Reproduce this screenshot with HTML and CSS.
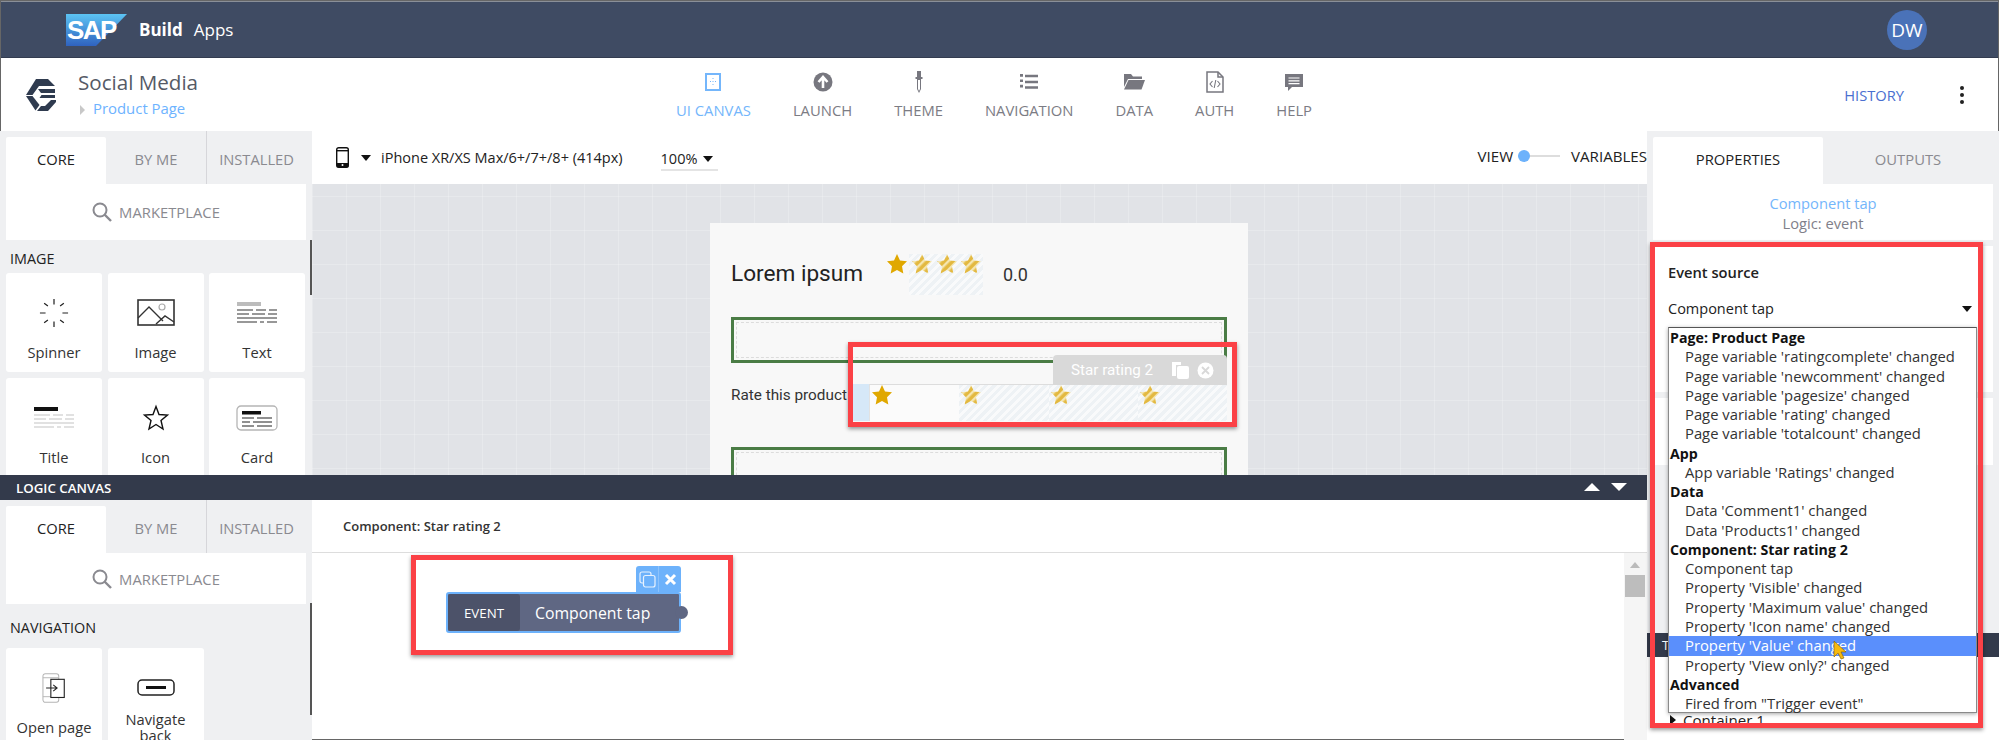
FILE: index.html
```html
<!DOCTYPE html>
<html>

<head>
    <title>SAP Build Apps</title>
    <link rel="stylesheet" href="styles.css">
</head>

<body>
<svg class="defs" width="0" height="0">
    <defs>
        <polygon id="star" points="10,0 13,6.5 20,7.3 15,12.2 16.300,19.500 10,16 3.700,19.500 5,12.2 0,7.3 7,6.5"/>
        <pattern id="stripes" width="6" height="6" patternUnits="userSpaceOnUse" patternTransform="rotate(45)">
            <rect width="6" height="6" fill="#e3b941"/>
            <rect width="2.400" height="6" fill="#f5e6b0"/>
        </pattern>
    </defs>
</svg>
<div class="app">

    <div class="topbar">
        <svg class="sap" width="61" height="32" viewBox="0 0 61 32">
            <defs>
                <linearGradient id="sapblue" x1="0" y1="0" x2="0" y2="1">
                    <stop offset="0" stop-color="#5cc4f4"/>
                    <stop offset="1" stop-color="#2f62bf"/>
                </linearGradient>
            </defs>
            <polygon points="0,0 61,0 30,32 0,32" fill="url(#sapblue)"/>
            <text x="1" y="25" class="sap-text">SAP</text>
        </svg>
        <span class="build">Build</span>
        <span class="apps">Apps</span>
        <span class="avatar">DW</span>
    </div>

    <div class="header">
        <div class="brand">
            <svg class="brand-logo" width="30" height="32" viewBox="0 0 30 32">
                <path d="M10 0H22L29 7H13L6.500 16H0z" fill="#2f3b4f"/>
                <path d="M0 17H6.500L13.500 26 9.500 31.500z" fill="#2f3b4f"/>
                <path d="M11 32H22L30 23V21H25L19 27H15z" fill="#2f3b4f"/>
                <path d="M12 10H29V14H15zM15.500 16H29V19H13.500z" fill="#2f3b4f"/>
            </svg>
            <div class="brand-text">
                <div class="app-name">Social Media</div>
                <div class="page-name"><span class="page-caret"></span>Product Page</div>
            </div>
        </div>
        <div class="nav">
            <div class="nav-item active">
                <svg width="24" height="24" viewBox="0 0 24 24">
                    <rect x="5" y="4" width="14" height="16" fill="none" stroke="#74b6fb" stroke-width="2"/>
                    <path d="M12 8v1M12 11v1M12 14v1M9 11.500h1M14 11.500h1" stroke="#74b6fb" stroke-width="1"/>
                </svg>
                UI CANVAS
            </div>
            <div class="nav-item">
                <svg width="24" height="24" viewBox="0 0 24 24">
                    <circle cx="12" cy="12" r="9.500" fill="#77777f"/>
                    <path d="M12 18V8M7.500 12L12 7l4.500 5" stroke="#fff" stroke-width="2.600" fill="none"/>
                </svg>
                LAUNCH
            </div>
            <div class="nav-item">
                <svg width="24" height="24" viewBox="0 0 24 24">
                    <path d="M10 1h4v6h1.500v2H14v10l-2 4-2-4V9H8.500V7H10z" fill="#77777f"/>
                    <path d="M11 10h2v9l-1 2-1-2z" fill="#fff"/>
                </svg>
                THEME
            </div>
            <div class="nav-item">
                <svg width="24" height="24" viewBox="0 0 24 24">
                    <path d="M3 5h3v3H3zM3 11h3v3H3zM3 17h3v3H3z" transform="translate(0 -.5) scale(1 .9)" fill="#77777f"/>
                    <path d="M8 6h13M8 12h13M8 17.500h13" stroke="#77777f" stroke-width="2.400"/>
                </svg>
                NAVIGATION
            </div>
            <div class="nav-item">
                <svg width="24" height="24" viewBox="0 0 24 24">
                    <path d="M2 4h7l2 2.500h9V9H6L2 17z" fill="#77777f"/>
                    <path d="M6.500 10H23l-3.500 9.500H2z" fill="#77777f"/>
                </svg>
                DATA
            </div>
            <div class="nav-item">
                <svg width="24" height="24" viewBox="0 0 24 24">
                    <path d="M4 2h11l5 5v15H4z" fill="none" stroke="#77777f" stroke-width="1.500"/>
                    <path d="M15 2v5h5" fill="none" stroke="#77777f" stroke-width="1.500"/>
                    <path d="M9.500 11l-2.500 3 2.500 3M14.500 11l2.500 3-2.500 3M12.800 10l-1.600 8" fill="none" stroke="#77777f" stroke-width="1.100"/>
                </svg>
                AUTH
            </div>
            <div class="nav-item">
                <svg width="24" height="24" viewBox="0 0 24 24">
                    <path d="M3 4h18v13H10l-4 4v-4H3z" fill="#77777f"/>
                    <path d="M6.500 8h11M6.500 10.800h11M6.500 13.600h11" stroke="#fff" stroke-width="1.200"/>
                </svg>
                HELP
            </div>
        </div>
        <div class="header-right">
            <span class="history">HISTORY</span>
            <span class="dots"><i></i><i></i><i></i></span>
        </div>
    </div>

    <div class="main">
        <div class="workspace">

            <div class="split upper">
                <div class="palette">
                    <div class="tabs">
                        <div class="tab on">CORE</div>
                        <div class="tab">BY ME</div>
                        <div class="tab sep">INSTALLED</div>
                    </div>
                    <div class="search">
                        <svg width="20" height="20" viewBox="0 0 20 20"><circle cx="8" cy="8" r="6.500" fill="none" stroke="#8a8a90" stroke-width="2"/><path d="M12.500 12.500L19 19" stroke="#8a8a90" stroke-width="2.400"/></svg>
                        MARKETPLACE
                    </div>
                    <div class="group-label image-label">IMAGE</div>
                    <div class="tiles">
                        <div class="tile">
                            <svg class="tile-icon" width="32" height="32" viewBox="0 0 32 32">
                                <path d="M16 1v6M16 25v6M1 16h6M25 16h6M5.500 5.500l4 3M26.500 5.500l-4 3M5.500 26.500l4-3M26.500 26.500l-4-3" stroke="#222" stroke-width="1.300"/>
                            </svg>
                            Spinner
                        </div>
                        <div class="tile">
                            <svg class="tile-icon" width="38" height="28" viewBox="0 0 38 28">
                                <rect x="1" y="1" width="36" height="25" fill="none" stroke="#333" stroke-width="1.600"/>
                                <path d="M1 19L12 8l14 14M19 25l9-8 9 6" fill="none" stroke="#333" stroke-width="1.400"/>
                                <circle cx="25" cy="8" r="3" fill="none" stroke="#aaa" stroke-width="1.200"/>
                            </svg>
                            Image
                        </div>
                        <div class="tile">
                            <svg class="tile-icon" width="40" height="24" viewBox="0 0 40 24">
                                <rect x="0" y="1" width="24" height="4" fill="#bcbcbc"/>
                                <path d="M0 9h16M19 9h10M32 9h8M0 13h12M15 13h13M31 13h9M0 17h40M0 21h20M23 21h4M30 21h10" stroke="#333" stroke-width="1.200"/>
                            </svg>
                            Text
                        </div>
                        <div class="tile">
                            <svg class="tile-icon" width="40" height="24" viewBox="0 0 40 24">
                                <rect x="0" y="1" width="24" height="4" fill="#111"/>
                                <path d="M0 9h16M19 9h10M32 9h8M0 13h12M15 13h13M31 13h9M0 17h40M0 21h20M23 21h4M30 21h10" stroke="#c4c4c4" stroke-width="1.200"/>
                            </svg>
                            Title
                        </div>
                        <div class="tile">
                            <svg class="tile-icon" width="26" height="26" viewBox="0 0 26 26">
                                <polygon points="13,1.500 16,9.500 24.500,10 18,15.500 20,24 13,19.500 6,24 8,15.500 1.500,10 10,9.500" fill="none" stroke="#111" stroke-width="1.400"/>
                            </svg>
                            Icon
                        </div>
                        <div class="tile">
                            <svg class="tile-icon" width="42" height="26" viewBox="0 0 42 26">
                                <rect x="1" y="1" width="40" height="24" rx="4" fill="none" stroke="#b5b5b5" stroke-width="1.300"/>
                                <rect x="6" y="6" width="19" height="3.500" fill="#111"/>
                                <path d="M6 13h12M21 13h15M6 17h8M17 17h19M6 21h12M21 21h15" stroke="#222" stroke-width="1.200"/>
                            </svg>
                            Card
                        </div>
                    </div>
                    <div class="thumb thumb-upper"></div>
                </div>

                <div class="stage">
                    <div class="stage-bar">
                        <svg class="phone" width="13" height="21" viewBox="0 0 13 21">
                            <rect x=".7" y=".7" width="11.600" height="19.600" rx="2" fill="none" stroke="#111" stroke-width="1.400"/>
                            <rect x=".7" y="3" width="11.600" height="1.400" fill="#111"/>
                            <rect x=".7" y="16" width="11.600" height="4.300" fill="#111"/>
                            <circle cx="6.500" cy="18" r="1" fill="#fff"/>
                        </svg>
                        <span class="caret device-caret"></span>
                        <span class="device">iPhone XR/XS Max/6+/7+/8+ (414px)</span>
                        <span class="zoom-select">100% <span class="caret"></span></span>
                        <span class="view-toggle">
                            VIEW
                            <span class="track"><i></i></span>
                            VARIABLES
                        </span>
                    </div>
                    <div class="canvas">
                        <div class="phone-card">
                            <div class="title-row">
                                <span class="lorem">Lorem ipsum</span>
                                <svg class="star-one" width="22" height="20" viewBox="0 0 20 20"><use href="#star" fill="#e0a800"/></svg>
                                <div class="hatched avg-stars">
                                    <svg width="20" height="20" viewBox="0 0 20 20"><use href="#star" fill="url(#stripes)"/></svg>
                                    <svg width="20" height="20" viewBox="0 0 20 20"><use href="#star" fill="url(#stripes)"/></svg>
                                    <svg width="20" height="20" viewBox="0 0 20 20"><use href="#star" fill="url(#stripes)"/></svg>
                                </div>
                                <span class="score">0.0</span>
                            </div>
                            <div class="green-box"><div class="dashed"></div></div>
                            <div class="rate-row">
                                <span class="rate-label">Rate this product</span>
                                <span class="rate-pad"></span>
                                <div class="rating">
                                    <div class="rating-bar">
                                        <span>Star rating 2</span>
                                        <svg width="19" height="19" viewBox="0 0 19 19">
                                            <path d="M1 1h9v3H5v11H1z" fill="#fff"/>
                                            <rect x="6" y="5" width="12" height="13" rx="2" fill="#fff"/>
                                        </svg>
                                        <svg class="bar-close" width="17" height="17" viewBox="0 0 17 17">
                                            <circle cx="8.500" cy="8.500" r="8" fill="#fff"/>
                                            <path d="M5 5l7 7M12 5l-7 7" stroke="#d9d9d9" stroke-width="1.800"/>
                                        </svg>
                                    </div>
                                    <div class="rating-cell"><svg width="20" height="20" viewBox="0 0 20 20"><use href="#star" fill="#e0a800"/></svg></div>
                                    <div class="rating-cell hatched"><svg width="20" height="20" viewBox="0 0 20 20"><use href="#star" fill="url(#stripes)"/></svg></div>
                                    <div class="rating-cell hatched"><svg width="20" height="20" viewBox="0 0 20 20"><use href="#star" fill="url(#stripes)"/></svg></div>
                                    <div class="rating-cell hatched"><svg width="20" height="20" viewBox="0 0 20 20"><use href="#star" fill="url(#stripes)"/></svg></div>
                                </div>
                            </div>
                            <div class="green-box low"><div class="dashed"></div></div>
                        </div>
                        <div class="redbox red-rating"></div>
                    </div>
                </div>
            </div>

            <div class="logic-bar">
                LOGIC CANVAS
                <span class="logic-arrows"><i class="up"></i><i class="down"></i></span>
            </div>

            <div class="split lower">
                <div class="palette">
                    <div class="tabs">
                        <div class="tab on">CORE</div>
                        <div class="tab">BY ME</div>
                        <div class="tab sep">INSTALLED</div>
                    </div>
                    <div class="search low">
                        <svg width="20" height="20" viewBox="0 0 20 20"><circle cx="8" cy="8" r="6.500" fill="none" stroke="#8a8a90" stroke-width="2"/><path d="M12.500 12.500L19 19" stroke="#8a8a90" stroke-width="2.400"/></svg>
                        MARKETPLACE
                    </div>
                    <div class="group-label nav-label">NAVIGATION</div>
                    <div class="tiles">
                        <div class="tile">
                            <svg class="tile-icon" width="30" height="38" viewBox="0 0 30 38">
                                <rect x="1" y="1" width="20" height="36" rx="3" fill="none" stroke="#b5b5b5" stroke-width="1.300"/>
                                <path d="M1 6h20M1 30h20" stroke="#b5b5b5" stroke-width="1.200"/>
                                <rect x="11" y="8" width="17" height="23" fill="#fff" stroke="#222" stroke-width="1.400"/>
                                <path d="M5 19h14M14 15l5 4-5 4" fill="none" stroke="#222" stroke-width="1.300"/>
                            </svg>
                            Open page
                        </div>
                        <div class="tile two-line">
                            <svg class="tile-icon" width="38" height="18" viewBox="0 0 38 18">
                                <rect x="1" y="1" width="36" height="15" rx="4" fill="none" stroke="#222" stroke-width="1.500"/>
                                <rect x="9" y="7" width="20" height="3" fill="#111"/>
                            </svg>
                            Navigate<br>back
                        </div>
                    </div>
                    <div class="thumb thumb-lower"></div>
                </div>

                <div class="logic">
                    <div class="logic-head">Component: Star rating 2</div>
                    <div class="logic-canvas">
                        <div class="flow-node">
                            <div class="node-tools">
                                <span>
                                    <svg width="17" height="17" viewBox="0 0 17 17">
                                        <rect x="1" y="1" width="11" height="11" rx="2" fill="none" stroke="#e8f2fe" stroke-width="1.200"/>
                                        <rect x="4.500" y="4.500" width="11.500" height="11.500" rx="2" fill="#6db2fb" stroke="#e8f2fe" stroke-width="1.200"/>
                                    </svg>
                                </span>
                                <span>
                                    <svg width="13" height="13" viewBox="0 0 13 13"><path d="M2 2l9 9M11 2l-9 9" stroke="#fff" stroke-width="3"/></svg>
                                </span>
                            </div>
                            <div class="node-kind">EVENT</div>
                            <div class="node-name">Component tap</div>
                            <span class="node-port"></span>
                        </div>
                        <div class="redbox red-node"></div>
                        <div class="scrollbar">
                            <i class="scroll-up"></i>
                            <i class="scroll-thumb"></i>
                        </div>
                    </div>
                </div>
            </div>
        </div>

        <div class="props">
            <div class="tabs prop-tabs">
                <div class="tab on">PROPERTIES</div>
                <div class="tab">OUTPUTS</div>
            </div>
            <div class="prop-title">
                <div class="prop-name">Component tap</div>
                <div class="prop-kind">Logic: event</div>
            </div>
            <div class="prop-card source-card">
                <div class="source-title">Event source</div>
                <div class="source-value">Component tap <span class="caret"></span></div>
            </div>
            <div class="prop-card second-card"></div>
            <div class="tree-bar">T</div>
            <div class="tree">
                <div class="tree-row"><span class="tree-caret"></span>Container 1</div>
            </div>

            <div class="dropdown">
                <div class="dd-group">Page: Product Page</div>
                <div class="dd-item">Page variable 'ratingcomplete' changed</div>
                <div class="dd-item">Page variable 'newcomment' changed</div>
                <div class="dd-item">Page variable 'pagesize' changed</div>
                <div class="dd-item">Page variable 'rating' changed</div>
                <div class="dd-item">Page variable 'totalcount' changed</div>
                <div class="dd-group">App</div>
                <div class="dd-item">App variable 'Ratings' changed</div>
                <div class="dd-group">Data</div>
                <div class="dd-item">Data 'Comment1' changed</div>
                <div class="dd-item">Data 'Products1' changed</div>
                <div class="dd-group">Component: Star rating 2</div>
                <div class="dd-item">Component tap</div>
                <div class="dd-item">Property 'Visible' changed</div>
                <div class="dd-item">Property 'Maximum value' changed</div>
                <div class="dd-item">Property 'Icon name' changed</div>
                <div class="dd-item selected">Property 'Value' changed
                    <svg class="pointer" width="14" height="20" viewBox="0 0 14 20">
                        <path d="M1 1l12 11H8l3 6-3 1-3-6-4 4z" fill="#f6b90f" stroke="#7a5a00" stroke-width=".6"/>
                    </svg>
                </div>
                <div class="dd-item">Property 'View only?' changed</div>
                <div class="dd-group">Advanced</div>
                <div class="dd-item">Fired from "Trigger event"</div>
            </div>
            <div class="redbox red-source"></div>
        </div>
    </div>
</div>
</body>

</html>
```

FILE: styles.css
```css
* {
  box-sizing: border-box;
}

html, body {
  margin: 0;
  padding: 0;
}

body {
  width: 1999px;
  height: 740px;
  overflow: hidden;
  font-family: "Open Sans", "Liberation Sans", sans-serif;
  color: #222;
}

.defs {
  position: absolute;
}

.app {
  width: 1999px;
  height: 740px;
  display: flex;
  flex-direction: column;
  outline: 1px solid #666;
  outline-offset: -1px;
}

/* Top bar */
.topbar {
  height: 58px;
  border-top: 2px solid #8a8f98;
  border-bottom: 1px solid #333c50;
  background-color: #3f4b63;
  display: flex;
  align-items: center;
  padding-left: 66px;
  color: #fff;
  font-size: 17px;
}

.sap {
  margin-right: 12px;
}

.sap-text {
  font-family: "Liberation Sans", sans-serif;
  font-weight: bold;
  font-size: 26px;
  letter-spacing: -1.5px;
  fill: #fff;
}

.build {
  font-weight: bold;
  margin-right: 11px;
}

.avatar {
  margin-left: auto;
  margin-right: 72px;
  width: 40px;
  height: 40px;
  border-radius: 50%;
  background-color: #4a72b8;
  font-size: 19px;
  display: flex;
  align-items: center;
  justify-content: center;
}

/* Header */
.header {
  height: 73px;
  background-color: #fff;
  display: grid;
  grid-template-columns: 676px auto 1fr;
}

.brand {
  display: flex;
  align-items: flex-start;
  padding-left: 26px;
  padding-top: 12px;
  gap: 22px;
}

.brand-logo {
  margin-top: 9px;
}

.app-name {
  font-size: 20.600px;
  line-height: 24px;
  color: #555a66;
}

.page-name {
  font-size: 14.900px;
  line-height: 20px;
  margin-top: 4px;
  color: #6db3ff;
}

.page-caret {
  display: inline-block;
  width: 0;
  height: 0;
  margin: 0 8px -1px 2px;
  border-left: 5px solid #c8c8c8;
  border-top: 5px solid transparent;
  border-bottom: 5px solid transparent;
}

.nav {
  display: flex;
  gap: 42px;
}

.nav-item {
  display: flex;
  flex-direction: column;
  align-items: center;
  padding-top: 12px;
  font-size: 14.800px;
  line-height: 16px;
  color: #7c7c84;
}

.nav-item svg {
  margin-bottom: 8px;
}

.nav-item.active {
  color: #74b6fb;
}

.header-right {
  display: flex;
  align-items: center;
  justify-content: flex-end;
  padding-right: 35px;
}

.history {
  font-size: 14.700px;
  color: #4a6fd0;
  margin-right: 56px;
}

.dots {
  display: flex;
  flex-direction: column;
  gap: 3px;
}

.dots i {
  width: 4px;
  height: 4px;
  border-radius: 50%;
  background-color: #222;
}

/* Main layout */
.main {
  flex: 1;
  display: grid;
  grid-template-columns: 1647px 352px;
  min-height: 0;
}

.workspace {
  display: flex;
  flex-direction: column;
  min-height: 0;
}

.split {
  display: grid;
  grid-template-columns: 312px 1fr;
  min-height: 0;
}

.upper {
  height: 344px;
}

.lower {
  height: 240px;
}

.palette {
  position: relative;
  background-color: #eff0f2;
  overflow: hidden;
  padding: 0 6px;
}

/* Tabs */
.tabs {
  display: grid;
  grid-template-columns: 100px 100px 1fr;
  height: 53px;
}

.tab {
  display: flex;
  align-items: center;
  justify-content: center;
  margin-top: 6px;
  padding-bottom: 4px;
  font-size: 14.700px;
  color: #8a8a90;
}

.tab.on {
  background-color: #fff;
  color: #222;
  border-radius: 2px 2px 0 0;
}

.tab.sep {
  margin-top: 0;
  padding-top: 6px;
  border-left: 1px solid #d6d6da;
}

.search {
  height: 56px;
  background-color: #fff;
  display: flex;
  align-items: center;
  justify-content: center;
  gap: 7px;
  font-size: 14.800px;
  color: #8a8a90;
}

.search.low {
  height: 51px;
}

.group-label {
  font-size: 14.400px;
  color: #222;
  padding-left: 4px;
}

.image-label {
  padding-top: 9px;
  height: 33px;
}

.nav-label {
  padding-top: 14px;
  height: 44px;
}

.tiles {
  display: grid;
  grid-template-columns: 96px 96px 96px;
  grid-auto-rows: 99px;
  gap: 6px 5.500px;
}

.tile {
  background-color: #fff;
  border-radius: 3px;
  display: flex;
  flex-direction: column;
  align-items: center;
  padding-top: 25px;
  font-size: 14.700px;
  line-height: 18px;
  color: #333;
  text-align: center;
}

.tile-icon {
  height: 30px;
  margin-bottom: 15px;
  flex: none;
  overflow: visible;
}

.two-line {
  line-height: 16px;
}

.two-line .tile-icon {
  margin-bottom: 8px;
}

.thumb {
  position: absolute;
  right: 0;
  width: 2px;
  background-color: #555;
}

.thumb-upper {
  top: 109px;
  height: 55px;
}

.thumb-lower {
  top: 103px;
  height: 112px;
}

/* Stage */
.stage {
  display: flex;
  flex-direction: column;
  min-height: 0;
  background-color: #fff;
}

.stage-bar {
  height: 53px;
  display: flex;
  align-items: center;
  padding-left: 24px;
  font-size: 14.500px;
  color: #222;
}

.caret {
  display: inline-block;
  width: 0;
  height: 0;
  border-left: 5px solid transparent;
  border-right: 5px solid transparent;
  border-top: 6px solid #111;
}

.device-caret {
  margin: 0 10px 0 12px;
}

.zoom-select {
  margin-left: 38px;
  margin-top: 5px;
  padding-right: 5px;
  line-height: 20px;
  border-bottom: 2px solid #e4e4e4;
  display: flex;
  align-items: center;
  gap: 6px;
}

.view-toggle {
  margin-left: auto;
  display: flex;
  align-items: center;
  font-size: 15.100px;
  margin-bottom: 3px;
}

.track {
  position: relative;
  width: 42px;
  height: 2px;
  margin: 0 11px 0 5px;
  background-color: #ddd;
}

.track i {
  position: absolute;
  left: 0;
  top: -5px;
  width: 12px;
  height: 12px;
  border-radius: 50%;
  background-color: #6db2fb;
}

.canvas {
  position: relative;
  flex: 1;
  overflow: hidden;
  padding: 39px 0 0 398px;
  background-color: #e1e3e7;
  background-image:
    linear-gradient(rgba(255, 255, 255, .2) 1px, transparent 1px),
    linear-gradient(90deg, rgba(255, 255, 255, .2) 1px, transparent 1px);
  background-size: 34px 34px;
  background-position: 0 12px;
}

.phone-card {
  width: 538px;
  height: 360px;
  padding: 31px 21px 0;
  background-color: #f8f8f8;
  font-family: "Roboto", sans-serif;
}

.title-row {
  display: flex;
  align-items: flex-start;
  height: 41px;
}

.lorem {
  width: 155px;
  font-size: 22.600px;
  line-height: 40px;
  color: #222;
}

.star-one {
  margin-right: 1px;
}

.hatched {
  background-image: repeating-linear-gradient(135deg, #eef2f5 0, #eef2f5 3px, #f9fafb 3px, #f9fafb 6px);
}

.avg-stars {
  display: flex;
  gap: 4.500px;
  height: 41px;
  width: 74px;
  padding-left: 3px;
}

.score {
  margin-left: 20px;
  font-size: 18px;
  line-height: 42px;
  color: #333;
}

.green-box {
  margin-top: 22px;
  width: 496px;
  height: 46px;
  border: 3px solid #4a7c45;
  padding: 2px;
}

.green-box.low {
  margin-top: 26px;
  height: 80px;
}

.dashed {
  height: 100%;
  border: 1px dashed #dcdcdc;
}

.rate-row {
  margin-top: 21px;
  display: flex;
  height: 37px;
  width: 496px;
}

.rate-label {
  width: 122px;
  font-size: 15.300px;
  line-height: 22px;
  color: #333;
}

.rate-pad {
  width: 16px;
  background-color: #d6e8f8;
}

.rating {
  position: relative;
  flex: 1;
  display: grid;
  grid-template-columns: repeat(4, 1fr);
  border-top: 1px solid #ddd;
  border-left: 1px solid #e2e2e2;
  background-color: #fbfbfb;
}

.rating-cell {
  padding-left: 2px;
}

.rating-cell svg {
  display: block;
}

.rating-bar {
  position: absolute;
  right: 0;
  bottom: 100%;
  width: 174px;
  height: 30px;
  padding-left: 18px;
  display: flex;
  align-items: center;
  background-color: #d9d9d9;
  border-radius: 4px 4px 0 0;
  color: #fff;
  font-size: 15.200px;
}

.rating-bar span {
  width: 100px;
}

.bar-close {
  margin-left: 7px;
}

/* Annotations */
.redbox {
  position: absolute;
  border: 5px solid #fb4146;
  box-shadow: 0 2px 4px rgba(0, 0, 0, .4);
  pointer-events: none;
}

.red-rating {
  left: 536px;
  top: 158px;
  width: 389px;
  height: 85px;
}

.red-node {
  left: 99px;
  top: 2px;
  width: 322px;
  height: 100px;
}

.red-source {
  left: 3px;
  top: 111px;
  width: 333px;
  height: 486px;
}

/* Logic bar */
.logic-bar {
  position: relative;
  height: 25px;
  padding-left: 16px;
  background-color: #333a4b;
  color: #fff;
  font-size: 13.300px;
  line-height: 26px;
  font-weight: 600;
}

.logic-arrows {
  position: absolute;
  right: 20px;
  top: 8px;
  display: flex;
  gap: 11px;
}

.logic-arrows i {
  width: 0;
  height: 0;
  border-left: 8px solid transparent;
  border-right: 8px solid transparent;
}

.logic-arrows .up {
  border-bottom: 8px solid #fff;
}

.logic-arrows .down {
  border-top: 8px solid #fff;
}

/* Logic canvas */
.logic {
  display: flex;
  flex-direction: column;
  min-height: 0;
  background-color: #fff;
}

.logic-head {
  height: 53px;
  padding-left: 31px;
  display: flex;
  align-items: center;
  font-size: 13px;
  font-weight: 600;
  color: #333;
  border-bottom: 1px solid #ddd;
}

.logic-canvas {
  position: relative;
  flex: 1;
}

.flow-node {
  position: absolute;
  left: 134px;
  top: 39px;
  width: 235px;
  height: 41px;
  display: flex;
  border: 2px solid #6db2fb;
  border-radius: 3px;
  background-color: #5f6783;
  color: #fff;
}

.node-tools {
  position: absolute;
  right: -2px;
  bottom: 100%;
  margin-bottom: 2px;
  width: 45px;
  height: 26px;
  display: flex;
  background-color: #6db2fb;
  border-radius: 3px 3px 0 0;
}

.node-tools span {
  flex: 1;
  display: flex;
  align-items: center;
  justify-content: center;
}

.node-tools span + span {
  border-left: 1px solid #8cc2fc;
}

.node-kind {
  width: 72px;
  background-color: #4c5269;
  border-radius: 3px;
  font-size: 13.300px;
  display: flex;
  align-items: center;
  justify-content: center;
}

.node-name {
  padding-left: 15px;
  font-size: 15.800px;
  display: flex;
  align-items: center;
}

.node-port {
  position: absolute;
  right: -9px;
  top: 12px;
  width: 13px;
  height: 13px;
  border-radius: 50%;
  background-color: #5f6783;
}

.scrollbar {
  position: absolute;
  right: 0;
  top: 0;
  bottom: 0;
  width: 23px;
  padding: 9px 2px 0 1px;
  background-color: #f5f5f5;
  display: flex;
  flex-direction: column;
  align-items: center;
}

.scroll-up {
  width: 0;
  height: 0;
  border-left: 5px solid transparent;
  border-right: 5px solid transparent;
  border-bottom: 6px solid #bbb;
  margin-bottom: 7px;
}

.scroll-thumb {
  width: 20px;
  height: 22px;
  background-color: #bdbdbd;
}

/* Right panel */
.props {
  position: relative;
  background-color: #eff0f2;
  padding: 0 6px;
  display: flex;
  flex-direction: column;
}

.prop-tabs {
  grid-template-columns: 170px 170px;
}

.prop-tabs .tab {
  font-size: 14.800px;
}

.prop-title {
  height: 56px;
  background-color: #fff;
  text-align: center;
  font-size: 14.700px;
  line-height: 20px;
  padding-top: 9px;
}

.prop-name {
  color: #74b6fb;
}

.prop-kind {
  color: #80808a;
}

.prop-card {
  background-color: #fff;
  margin-top: 6px;
  padding: 0 15px;
}

.source-card {
  height: 146px;
}

.second-card {
  height: 67px;
}

.source-title {
  font-size: 14.700px;
  font-weight: 600;
  padding-top: 16px;
  line-height: 20px;
}

.source-value {
  display: flex;
  justify-content: space-between;
  align-items: center;
  font-size: 14.500px;
  line-height: 20px;
  margin-top: 17px;
  padding-right: 6px;
}

.tree-bar {
  margin: 168px -6px 0;
  height: 24px;
  padding-left: 15px;
  background-color: #333a4b;
  color: #fff;
  font-size: 13.300px;
  line-height: 24px;
}

.tree {
  flex: 1;
  margin: 0 -6px;
  background-color: #fff;
  padding: 54px 0 0 23px;
}

.tree-row {
  font-size: 15.100px;
  line-height: 18px;
  display: flex;
  align-items: center;
  gap: 7px;
}

.tree-caret {
  width: 0;
  height: 0;
  border-left: 6px solid #111;
  border-top: 5px solid transparent;
  border-bottom: 5px solid transparent;
}

.dropdown {
  position: absolute;
  left: 21px;
  top: 196px;
  width: 309px;
  height: 386px;
  background-color: #fff;
  border: 1px solid #8a8a8a;
  border-top-color: #555;
  box-shadow: 0 1px 4px rgba(0, 0, 0, .35);
  font-size: 14.800px;
  line-height: 19.270px;
  color: #333;
  white-space: nowrap;
}

.dd-group {
  padding-left: 1px;
  font-size: 14.200px;
  font-weight: bold;
  color: #111;
}

.dd-item {
  padding-left: 16px;
}

.selected {
  position: relative;
  background-color: #5a8ffc;
  color: #fff;
}

.pointer {
  position: absolute;
  left: 164px;
  top: 4px;
}
```
